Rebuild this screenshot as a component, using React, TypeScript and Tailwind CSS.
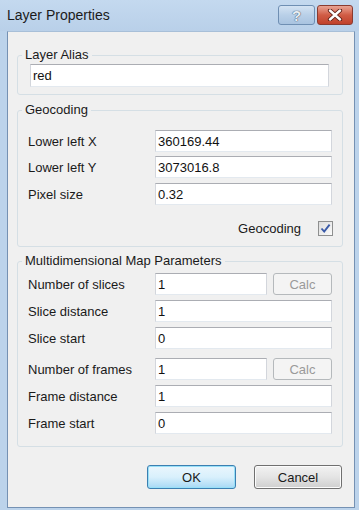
import React from "react";

const font = "font-['Liberation_Sans',Arial,sans-serif]";

function TextInput({ value, w = "w-[177px]", h = "h-[22px]" }: { value: string; w?: string; h?: string }) {
  return (
    <div
      className={`${w} ${h} bg-white border border-[#d3d6dc] border-t-[#abadb3] border-b-[#e3e9ef] flex items-center pl-[2px] text-[13px] text-[#111] leading-none`}
    >
      {value}
    </div>
  );
}

function Row({ label, value, calc, mt }: { label: string; value: string; calc?: boolean; mt: string }) {
  return (
    <div className={`flex items-center ${mt} ml-[10px]`}>
      <div className="w-[127px] text-[13px] text-[#1a1a1a] leading-none">{label}</div>
      {calc ? (
        <div className="flex gap-[6px]">
          <TextInput value={value} w="w-[112px]" />
          <div className="w-[59px] h-[22px] border border-[#b5b9bc] rounded-[3px] bg-[#f4f4f4] flex items-center justify-center text-[13px] text-[#9a9a9a] leading-none">
            Calc
          </div>
        </div>
      ) : (
        <TextInput value={value} />
      )}
    </div>
  );
}

function Legend({ text }: { text: string }) {
  return (
    <div className="-mt-[9px] ml-[4px] px-[3px] w-fit bg-[#f0f0f0] text-[13px] leading-[16px] text-[#1a1a1a]">
      {text}
    </div>
  );
}

export default function App() {
  return (
    <div className={`w-[359px] h-[510px] bg-[#bcd3eb] flex flex-col overflow-hidden ${font}`}>
      {/* Title bar */}
      <div className="h-[31px] flex bg-gradient-to-b from-[#c4d9ef] to-[#b9d0e9]">
        <div className="flex-1 pl-[7px] leading-[30px] text-[14px] text-[#1b1b1b]">Layer Properties</div>
        <div className="flex gap-[2px] mt-[5px] mr-[6px]">
          <div className="w-[37px] h-[20px] rounded-[3px] border border-[#6f8fb3] bg-gradient-to-b from-[#d4e3f3] via-[#b9d0e8] to-[#a9c3e0] flex items-center justify-center">
            <span className="text-[15px] font-bold text-[#e9eef4] leading-none [text-shadow:0_0_1px_#3c4f66,0_0_1px_#3c4f66]">?</span>
          </div>
          <div className="w-[36px] h-[20px] rounded-[3px] border border-[#8a3b30] bg-gradient-to-b from-[#e8a394] via-[#d05c45] to-[#c0412b] flex items-center justify-center">
            <svg width="16" height="12" viewBox="0 0 16 12">
              <path d="M3 1.5 L13 10.5 M13 1.5 L3 10.5" stroke="#5a1d14" strokeWidth="4.2" strokeLinecap="round" />
              <path d="M3 1.5 L13 10.5 M13 1.5 L3 10.5" stroke="#ffffff" strokeWidth="2.4" strokeLinecap="round" />
            </svg>
          </div>
        </div>
      </div>

      {/* Client */}
      <div className="ml-[7px] w-[348px] h-[477px] bg-[#f0f0f0] border-l border-r border-b border-[#7591b3] border-t border-t-[#a8bfd8] flex flex-col">
        {/* Layer Alias */}
        <div className="mt-[23px] ml-[9px] w-[326px] border border-[#d5dfe5] rounded-[3px] pb-[7px] flex flex-col">
          <Legend text="Layer Alias" />
          <div className="mt-[1px] ml-[12px]">
            <TextInput value="red" w="w-[299px]" h="h-[23px]" />
          </div>
        </div>

        {/* Geocoding */}
        <div className="mt-[15px] ml-[9px] w-[326px] border border-[#d5dfe5] rounded-[3px] pb-[10px] flex flex-col">
          <Legend text="Geocoding" />
          <Row label="Lower left X" value="360169.44" mt="mt-[12px]" />
          <Row label="Lower left Y" value="3073016.8" mt="mt-[4px]" />
          <Row label="Pixel size" value="0.32" mt="mt-[5px]" />
          <div className="mt-[16px] flex items-center justify-end mr-[9px] gap-[17px]">
            <span className="text-[13px] leading-none text-[#1a1a1a]">Geocoding</span>
            <div className="w-[15px] h-[15px] border border-[#8e8f8f] bg-gradient-to-br from-[#dcdcdc] to-[#fbfbfb] flex items-center justify-center">
              <svg width="11" height="11" viewBox="0 0 11 11">
                <path d="M1.5 5.5 L4.2 8.6 L9.6 1.6" stroke="#3a5aa8" strokeWidth="1.9" fill="none" />
              </svg>
            </div>
          </div>
        </div>

        {/* Multidimensional */}
        <div className="mt-[14px] ml-[9px] w-[326px] border border-[#d5dfe5] rounded-[3px] pb-[12px] flex flex-col">
          <Legend text="Multidimensional Map Parameters" />
          <Row label="Number of slices" value="1" calc mt="mt-[4px]" />
          <Row label="Slice distance" value="1" mt="mt-[5px]" />
          <Row label="Slice start" value="0" mt="mt-[5px]" />
          <Row label="Number of frames" value="1" calc mt="mt-[9px]" />
          <Row label="Frame distance" value="1" mt="mt-[5px]" />
          <Row label="Frame start" value="0" mt="mt-[5px]" />
        </div>

        {/* Buttons */}
        <div className="mt-[18px] flex justify-end gap-[18px] mr-[12px]">
          <div className="w-[89px] h-[24px] rounded-[3px] border border-[#3c7fb1] bg-gradient-to-b from-[#eaf6fd] via-[#d9f0fc] to-[#a7d9f5] shadow-[inset_0_0_0_1px_#98e0f8] flex items-center justify-center text-[13px] text-[#1a1a1a] leading-none">
            OK
          </div>
          <div className="w-[88px] h-[24px] rounded-[3px] border border-[#707070] bg-gradient-to-b from-[#f2f2f2] via-[#e4e4e4] to-[#cfcfcf] shadow-[inset_0_0_0_1px_#fcfcfc] flex items-center justify-center text-[13px] text-[#1a1a1a] leading-none">
            Cancel
          </div>
        </div>
      </div>
    </div>
  );
}
